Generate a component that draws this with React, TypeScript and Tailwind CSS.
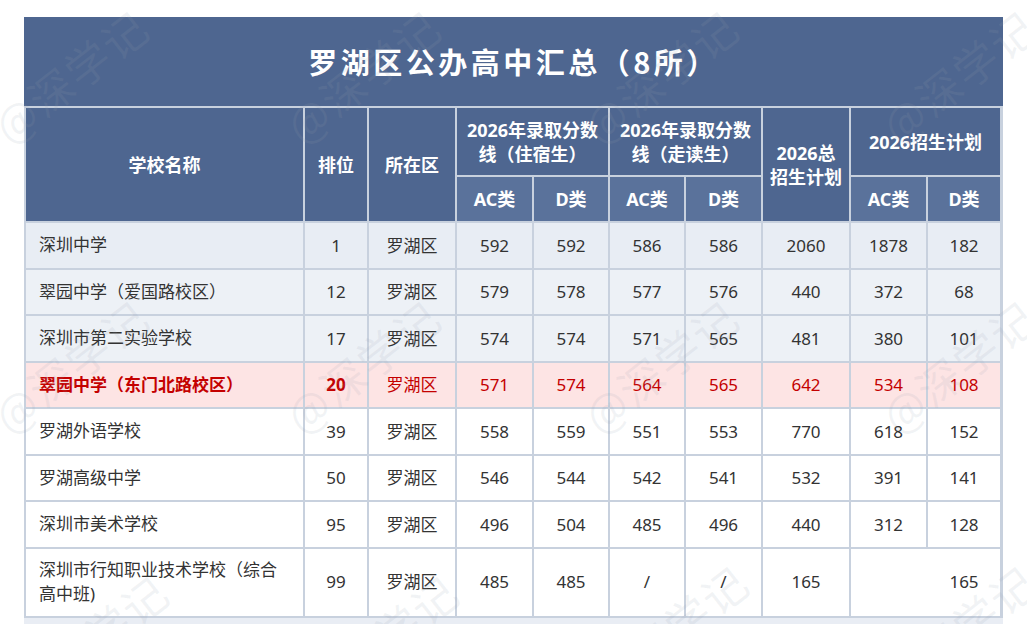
import React from 'react'

type Row = {
  name: string
  rank: string
  area: string
  vals: string[]
  bg: string
  hot?: boolean
  merged?: boolean
}

const rows: Row[] = [
  { name: '深圳中学', rank: '1', area: '罗湖区', vals: ['592', '592', '586', '586', '2060', '1878', '182'], bg: 'bg-[#e8edf4]' },
  { name: '翠园中学（爱国路校区）', rank: '12', area: '罗湖区', vals: ['579', '578', '577', '576', '440', '372', '68'], bg: 'bg-[#edf1f6]' },
  { name: '深圳市第二实验学校', rank: '17', area: '罗湖区', vals: ['574', '574', '571', '565', '481', '380', '101'], bg: 'bg-[#edf1f6]' },
  { name: '翠园中学（东门北路校区）', rank: '20', area: '罗湖区', vals: ['571', '574', '564', '565', '642', '534', '108'], bg: 'bg-[#fde4e4]', hot: true },
  { name: '罗湖外语学校', rank: '39', area: '罗湖区', vals: ['558', '559', '551', '553', '770', '618', '152'], bg: 'bg-white' },
  { name: '罗湖高级中学', rank: '50', area: '罗湖区', vals: ['546', '544', '542', '541', '532', '391', '141'], bg: 'bg-white' },
  { name: '深圳市美术学校', rank: '95', area: '罗湖区', vals: ['496', '504', '485', '496', '440', '312', '128'], bg: 'bg-white' },
  { name: '深圳市行知职业技术学校（综合高中班)', rank: '99', area: '罗湖区', vals: ['485', '485', '/', '/', '165', '', '165'], bg: 'bg-white', merged: true },
]

const head = 'bg-[#4e6690] text-white font-bold text-[18px] leading-[24px] flex items-center justify-center text-center'
const sub = 'bg-[#5a729b] text-white font-bold text-[18px] flex items-center justify-center'

// tiled "@深学记" watermark positions
const marks = [
  [70, 75], [362, 75], [660, 75], [958, 75],
  [70, 365], [362, 365], [660, 365], [958, 365],
  [90, 640], [380, 640], [670, 630], [958, 630],
]

export default function App() {
  return (
    <div className="relative w-[1027px] h-[624px] overflow-hidden bg-white font-['Noto_Sans','Noto_Sans_CJK_SC',sans-serif]">
      <div className="ml-[24px] mt-[17px] w-[979px]">
        {/* Title band */}
        <div className="h-[89px] bg-[#4e6690] flex items-center justify-center">
          <span className="text-white font-bold text-[29px] tracking-[3.5px] font-['Noto_Sans_CJK_SC',sans-serif]">
            罗湖区公办高中汇总（8所）
          </span>
        </div>

        <div className="grid gap-[2px] p-[2px] pr-[3px] bg-[#c8d1de] grid-cols-[277px_62px_86px_75px_74px_74px_75px_86px_75px_72px] grid-rows-[67px_44px_repeat(7,44.5px)_67px]">
          <div className={`${head} row-span-2`}>学校名称</div>
          <div className={`${head} row-span-2`}>排位</div>
          <div className={`${head} row-span-2`}>所在区</div>
          <div className={`${head} col-span-2`}>2026年录取分数<br />线（住宿生）</div>
          <div className={`${head} col-span-2`}>2026年录取分数<br />线（走读生）</div>
          <div className={`${head} row-span-2`}>2026总<br />招生计划</div>
          <div className={`${head} col-span-2`}>2026招生计划</div>
          <div className={sub}>AC类</div>
          <div className={sub}>D类</div>
          <div className={sub}>AC类</div>
          <div className={sub}>D类</div>
          <div className={sub}>AC类</div>
          <div className={sub}>D类</div>

          {rows.map((r) => {
            const color = r.hot ? 'text-[#c40000]' : 'text-[#333]'
            const cell = `${r.bg} ${color} text-[17px] flex items-center justify-center`
            return (
              <React.Fragment key={r.name}>
                <div className={`${r.bg} ${color} text-[17px] leading-[24px] flex items-center pl-[13px] pr-[10px] ${r.hot ? 'font-bold' : ''}`}>
                  {r.name}
                </div>
                <div className={`${cell} ${r.hot ? 'font-bold' : ''}`}>{r.rank}</div>
                <div className={cell}>{r.area}</div>
                {r.vals.slice(0, 5).map((v, i) => (
                  <div key={i} className={cell}>{v}</div>
                ))}
                {r.merged ? (
                  <div className={`${r.bg} ${color} col-span-2 grid grid-cols-[77px_72px]`}>
                    <div />
                    <div className="flex items-center justify-center text-[17px]">{r.vals[6]}</div>
                  </div>
                ) : (
                  <>
                    <div className={cell}>{r.vals[5]}</div>
                    <div className={cell}>{r.vals[6]}</div>
                  </>
                )}
              </React.Fragment>
            )
          })}
        </div>
        <div className="h-[10px] bg-[#e9edf4]" />
      </div>

      {/* watermark overlay */}
      {marks.map(([x, y], i) => (
        <span
          key={i}
          className="absolute pointer-events-none select-none -translate-x-1/2 -translate-y-1/2 -rotate-[38deg] text-[44px] tracking-[2px] text-[rgba(150,160,175,0.13)] font-['Noto_Sans_CJK_SC',sans-serif] whitespace-nowrap"
          style={{ left: x, top: y }}
        >
          @深学记
        </span>
      ))}
    </div>
  )
}
